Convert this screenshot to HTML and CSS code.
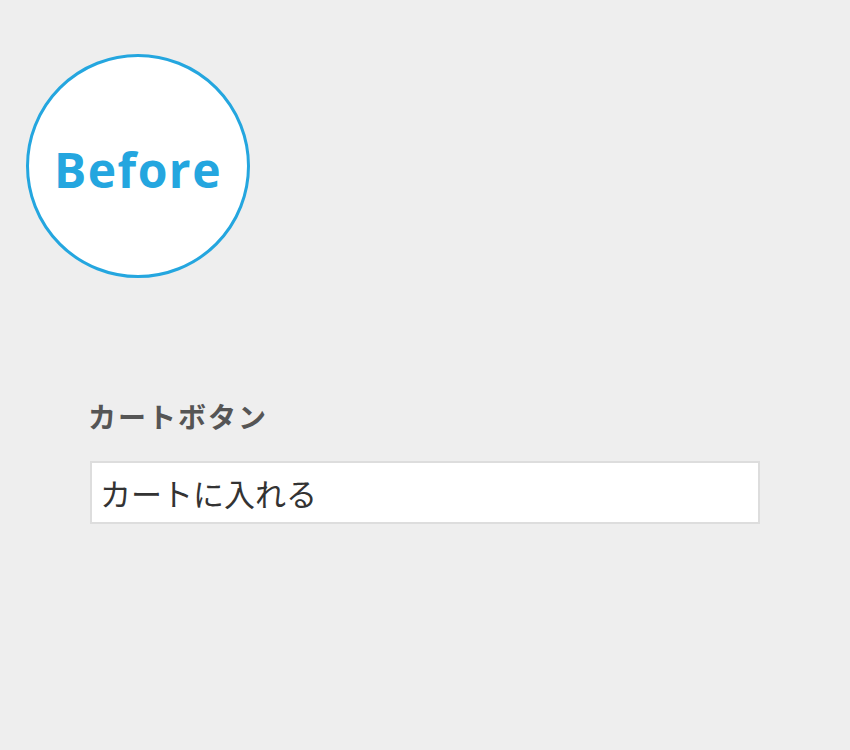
FILE: index.html
```html
<!DOCTYPE html>
<html lang="ja">
<head>
  <meta charset="UTF-8" />
  <title>Before</title>
  <link rel="stylesheet" href="styles.css">
</head>
<body>
<div class="page">
  <div class="badge"><span>Before</span></div>
  <div class="field">
    <label class="field-label" for="cartBtn">カートボタン</label>
    <input type="text" id="cartBtn" class="field-input" value="カートに入れる" />
  </div>
</div>
</body>
</html>
```

FILE: styles.css
```css
html, body {
  margin: 0; padding: 0;
  background: #eeeeee;
}
.page {
  width: 850px;
  height: 750px;
  padding: 54px 0 0 26px;
  box-sizing: border-box;
}
.badge {
  width: 224px;
  height: 224px;
  border: 3px solid #24a6df;
  border-radius: 50%;
  background: #fff;
  box-sizing: border-box;
  display: flex;
  align-items: center;
  justify-content: center;
}
.badge span {
  font-family: "Open Sans", sans-serif;
  font-weight: 700;
  font-size: 48px;
  letter-spacing: 1.5px;
  color: #24a6df;
  margin-top: 6px;
}
.field {
  margin: 122px 0 0 62px;
  display: flex;
  flex-direction: column;
}
.field-label {
  font-family: "Noto Sans CJK JP", sans-serif;
  font-weight: 700;
  font-size: 28px;
  line-height: 32px;
  letter-spacing: 2px;
  color: #555;
  margin-bottom: 29px;
}
.field-input {
  width: 670px;
  height: 63px;
  margin-left: 2px;
  box-sizing: border-box;
  border: 2px solid #dddddd;
  background: #fff;
  padding: 0 8px;
  font-family: "Noto Sans CJK JP", sans-serif;
  font-size: 31px;
  color: #333;
  outline: none;
}
```
